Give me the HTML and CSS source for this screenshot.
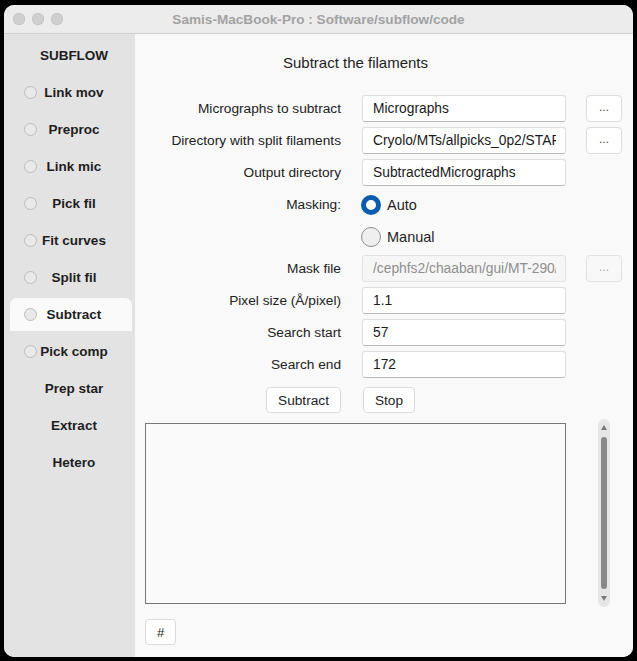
FILE: index.html
```html
<!DOCTYPE html>
<html>
<head>
<meta charset="utf-8">
<link rel="stylesheet" href="styles.css">
</head>
<body>
<div class="window">
  <div class="titlebar">
    <div class="lights"><span class="light"></span><span class="light"></span><span class="light"></span></div>
    <div class="wtitle">Samis-MacBook-Pro : Software/subflow/code</div>
  </div>
  <div class="wbody">
    <nav class="sidebar">
      <div class="item"><span></span><span class="lbl">SUBFLOW</span></div>
      <div class="item"><span class="sradio"></span><span class="lbl">Link mov</span></div>
      <div class="item"><span class="sradio"></span><span class="lbl">Preproc</span></div>
      <div class="item"><span class="sradio"></span><span class="lbl">Link mic</span></div>
      <div class="item"><span class="sradio"></span><span class="lbl">Pick fil</span></div>
      <div class="item"><span class="sradio"></span><span class="lbl">Fit curves</span></div>
      <div class="item"><span class="sradio"></span><span class="lbl">Split fil</span></div>
      <div class="item active"><span class="sradio"></span><span class="lbl">Subtract</span></div>
      <div class="item"><span class="sradio"></span><span class="lbl">Pick comp</span></div>
      <div class="item"><span></span><span class="lbl">Prep star</span></div>
      <div class="item"><span></span><span class="lbl">Extract</span></div>
      <div class="item"><span></span><span class="lbl">Hetero</span></div>
    </nav>
    <main class="main">
      <h1 class="heading">Subtract the filaments</h1>
      <div class="form">
        <label class="flabel">Micrographs to subtract</label>
        <div class="input"><span class="val">Micrographs</span></div>
        <div class="browse">...</div>

        <label class="flabel">Directory with split filaments</label>
        <div class="input"><span class="val">Cryolo/MTs/allpicks_0p2/STAR</span></div>
        <div class="browse">...</div>

        <label class="flabel">Output directory</label>
        <div class="input"><span class="val">SubtractedMicrographs</span></div>
        <div></div>

        <label class="flabel">Masking:</label>
        <div class="radio-opt"><span class="radio on"></span><span>Auto</span></div>
        <div></div>

        <div></div>
        <div class="radio-opt"><span class="radio"></span><span>Manual</span></div>
        <div></div>

        <label class="flabel">Mask file</label>
        <div class="input disabled"><span class="val">/cephfs2/chaaban/gui/MT-290/</span></div>
        <div class="browse disabled">...</div>

        <label class="flabel">Pixel size (Å/pixel)</label>
        <div class="input"><span class="val">1.1</span></div>
        <div></div>

        <label class="flabel">Search start</label>
        <div class="input"><span class="val">57</span></div>
        <div></div>

        <label class="flabel">Search end</label>
        <div class="input"><span class="val">172</span></div>
        <div></div>
      </div>
      <div class="actions">
        <button class="btn subtract">Subtract</button>
        <button class="btn stop">Stop</button>
      </div>
      <div class="logrow">
        <div class="log"></div>
        <div class="scrollbar">
          <span class="arrow up"></span>
          <span class="thumb"></span>
          <span class="arrow down"></span>
        </div>
      </div>
      <button class="btn hash">#</button>
    </main>
  </div>
</div>
</body>
</html>
```

FILE: styles.css
```css
html, body {
  margin: 0;
  padding: 0;
  background: #000;
}
body {
  width: 637px;
  height: 661px;
  overflow: hidden;
  font-family: "Liberation Sans", Arial, sans-serif;
  font-size: 13.7px;
  color: #222;
}
.window {
  margin: 5px 0 0 4px;
  width: 629px;
  height: 652px;
  border-radius: 10px;
  overflow: hidden;
  background: #f9f9f9;
  display: flex;
  flex-direction: column;
}
.titlebar {
  height: 28px;
  flex: none;
  background: #ececec;
  border-bottom: 1px solid #cdcdcd;
  display: grid;
  grid-template-columns: 1fr;
  align-items: center;
  position: relative;
}
.lights {
  position: absolute;
  left: 9px;
  top: 8px;
  display: flex;
  gap: 7px;
}
.light {
  width: 12px;
  height: 12px;
  border-radius: 50%;
  background: #cfcfcf;
  box-shadow: inset 0 0 0 0.5px #bdbdbd;
}
.wtitle {
  text-align: center;
  font-weight: bold;
  font-size: 13.6px;
  color: #a2a2a2;
  padding-top: 1px;
}
.wbody {
  flex: 1;
  display: flex;
}
.sidebar {
  width: 131px;
  flex: none;
  background: #e3e3e3;
  padding-top: 5px;
  box-sizing: border-box;
  display: flex;
  flex-direction: column;
  gap: 4px;
}
.item {
  height: 33px;
  flex: none;
  margin: 0 3px 0 6px;
  padding: 0 21px 0 14px;
  display: grid;
  grid-template-columns: 13px 1fr;
  align-items: center;
  font-weight: bold;
  font-size: 13.5px;
  color: #1e1e1e;
}
.item .lbl {
  text-align: center;
  white-space: nowrap;
}
.item.active {
  background: #fafafa;
  border-radius: 7px 7px 0 0;
}
.sradio {
  width: 13px;
  height: 13px;
  border-radius: 50%;
  border: 1px solid #bcbcbc;
  background: #e9e9e9;
  box-sizing: border-box;
}
.main {
  flex: 1;
  padding: 19px 0 0 10px;
  background: #f9f9f9;
}
.heading {
  margin: 0;
  width: 421px;
  text-align: center;
  font-weight: normal;
  font-size: 15px;
  line-height: 20px;
  color: #1e1e1e;
}
.form {
  margin-top: 22px;
  display: grid;
  grid-template-columns: 197px 204px 36px;
  grid-auto-rows: 27px;
  column-gap: 20px;
  row-gap: 5px;
  align-items: center;
}
.flabel {
  text-align: right;
  padding-right: 1px;
  white-space: nowrap;
}
.input {
  height: 27px;
  box-sizing: border-box;
  background: #fff;
  border: 1px solid #dedede;
  border-bottom-color: #b9b9b9;
  border-radius: 3px;
  padding: 0 9px 0 10px;
  line-height: 25px;
  font-size: 13.8px;
  color: #1a1a1a;
}
.val {
  display: block;
  white-space: nowrap;
  overflow: hidden;
}
.input.disabled {
  background: #f6f6f6;
  border-color: #e2e2e2;
  color: #8f8f8f;
}
.browse {
  height: 27px;
  box-sizing: border-box;
  background: #fff;
  border: 1px solid #dcdcdc;
  border-radius: 4px;
  text-align: center;
  line-height: 22px;
  color: #555;
  font-size: 12px;
}
.browse.disabled {
  background: #f8f8f8;
  border-color: #e2e2e2;
  color: #aaa;
}
.radio-opt {
  display: flex;
  align-items: center;
  gap: 6px;
  font-size: 14.5px;
  color: #1e1e1e;
}
.radio {
  width: 20px;
  height: 20px;
  box-sizing: border-box;
  border-radius: 50%;
  border: 1px solid #8d8d8d;
  background: #efefef;
  margin-left: -1px;
}
.radio.on {
  border: 5px solid #0a5cad;
  background: #fff;
}
.actions {
  margin-top: 9px;
  display: grid;
  grid-template-columns: 197px 204px;
  column-gap: 20px;
}
.btn {
  font-family: "Liberation Sans", Arial, sans-serif;
  font-size: 13.7px;
  color: #1e1e1e;
  background: #fff;
  border: 1px solid #dadada;
  border-radius: 4px;
  height: 26px;
  padding: 0;
  margin: 0;
}
.subtract {
  justify-self: end;
  width: 75px;
  margin-right: 1px;
}
.stop {
  justify-self: start;
  width: 52px;
  margin-left: 1px;
}
.logrow {
  margin-top: 6px;
  display: flex;
  align-items: center;
  gap: 32px;
  width: 465px;
}
.log {
  width: 421px;
  height: 181px;
  box-sizing: border-box;
  border: 1px solid #777;
  background: #fafafa;
}
.scrollbar {
  width: 12px;
  height: 188px;
  border-radius: 6px;
  background: #e6e6e6;
  display: flex;
  flex-direction: column;
  align-items: center;
  padding: 6px 0;
  box-sizing: border-box;
  gap: 4px;
}
.arrow {
  width: 0;
  height: 0;
  border-left: 3.5px solid transparent;
  border-right: 3.5px solid transparent;
  flex: none;
}
.arrow.up {
  border-bottom: 5px solid #7a7a7a;
}
.arrow.down {
  border-top: 5px solid #7a7a7a;
}
.thumb {
  flex: 1;
  width: 6px;
  border-radius: 3px;
  background: #888;
  margin: 3px 0;
}
.hash {
  display: block;
  margin-top: 12px;
  width: 31px;
  height: 26px;
  font-size: 13px;
}
```
